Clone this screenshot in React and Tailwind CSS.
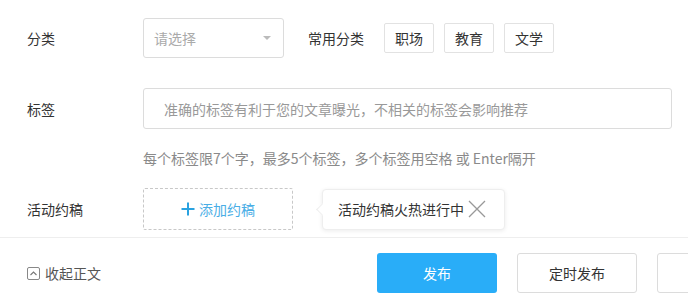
const FONT = "font-['Microsoft_YaHei','Noto_Sans_CJK_SC',sans-serif]";

const TAGS = ["职场", "教育", "文学"];

function Label({ children }) {
  return <div className="w-[143px] shrink-0 pl-[27px] text-sm text-[#333]">{children}</div>;
}

export default function App() {
  return (
    <div className={`${FONT} h-[302px] w-[688px] overflow-hidden bg-white`}>
      <div className="flex items-center pt-[18px]">
        <Label>分类</Label>
        <div className="flex h-10 w-[141px] items-center justify-between rounded-[3px] border border-[#dcdcdc] pl-[10px] pr-[12px] text-sm text-[#aaa]">
          <span>请选择</span>
          <span className="h-0 w-0 border-x-[4px] border-t-[4px] border-x-transparent border-t-[#bbb]" />
        </div>
        <span className="ml-[24px] text-sm text-[#333]">常用分类</span>
        <div className="ml-[20px] flex gap-[10px]">
          {TAGS.map((tag) => (
            <div
              key={tag}
              className="flex h-[30px] w-[50px] items-center justify-center rounded-[2px] border border-[#e2e2e2] text-sm text-[#333]"
            >
              {tag}
            </div>
          ))}
        </div>
      </div>

      <div className="mt-[30px] flex items-center">
        <Label>标签</Label>
        <div className="flex h-[41px] w-[529px] items-center rounded-[3px] border border-[#dcdcdc] pl-[20px] text-sm text-[#999]">
          准确的标签有利于您的文章曝光，不相关的标签会影响推荐
        </div>
      </div>
      <p className="ml-[143px] mt-[19px] text-sm leading-5 text-[#8a8a8a]">
        每个标签限7个字，最多5个标签，多个标签用空格 或 Enter隔开
      </p>

      <div className="mt-[20px] flex items-center">
        <Label>活动约稿</Label>
        <div className="flex h-[42px] w-[150px] items-center justify-center gap-[4px] rounded-[2px] border border-dashed border-[#c8c8c8] text-sm text-[#4aaee6]">
          <svg width="14" height="14" viewBox="0 0 14 14" className="text-[#2aa2e0]">
            <path d="M7 0.5v13M0.5 7h13" stroke="currentColor" strokeWidth="2" />
          </svg>
          <span>添加约稿</span>
        </div>
        <div className="relative ml-[29px] flex h-[41px] w-[183px] items-center rounded-[4px] border border-[#eee] bg-white pl-[15px] text-sm text-[#333] shadow-[0_1px_4px_rgba(0,0,0,0.08)]">
          <span className="absolute -left-[5px] top-[15px] h-[9px] w-[9px] rotate-45 border-b border-l border-[#eee] bg-white" />
          <span className="relative">活动约稿火热进行中</span>
          <svg width="18" height="18" viewBox="0 0 18 18" className="relative ml-[4px] text-[#999]">
            <path d="M1 1l16 16M17 1L1 17" stroke="currentColor" strokeWidth="1.3" />
          </svg>
        </div>
      </div>

      <div className="mt-[7px] flex items-center border-t border-[#eeeeee] pt-[15px]">
        <div className="flex w-[377px] shrink-0 items-center gap-[5px] pl-[27px] text-sm text-[#555]">
          <span className="flex h-[13px] w-[13px] items-center justify-center rounded-[2px] border border-[#888]">
            <svg width="7" height="5" viewBox="0 0 7 5">
              <path d="M0.5 4l3-3 3 3" stroke="#777" fill="none" strokeWidth="1.1" />
            </svg>
          </span>
          <span>收起正文</span>
        </div>
        <div className="flex gap-[20px]">
          <button className="h-10 w-[120px] shrink-0 rounded-[3px] bg-[#29adf8] text-sm text-white">发布</button>
          <button className="h-10 w-[120px] shrink-0 rounded-[3px] border border-[#dcdcdc] bg-white text-sm text-[#333]">定时发布</button>
          <button aria-label="存草稿" className="h-10 w-[120px] shrink-0 rounded-[3px] border border-[#dcdcdc] bg-white" />
        </div>
      </div>
    </div>
  );
}
